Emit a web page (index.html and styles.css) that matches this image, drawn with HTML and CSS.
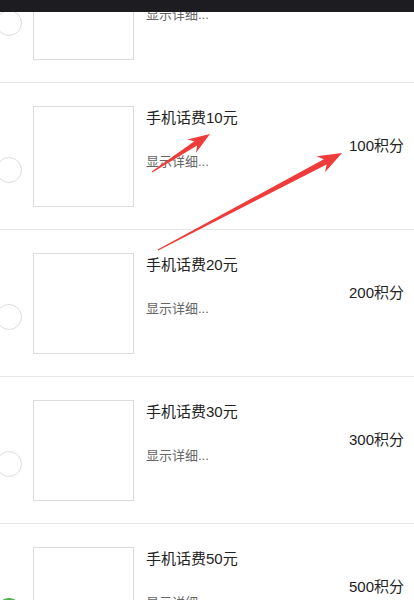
FILE: index.html
```html
<!DOCTYPE html>
<html lang="zh-CN">
<head>
  <meta charset="UTF-8" />
  <meta name="viewport" content="width=device-width, initial-scale=1.0"/>
  <title>积分兑换</title>
  <link rel="stylesheet" href="styles.css">
</head>
<body>
  <div class="statusbar"></div>

  <ul class="goods-list">
    <li class="goods-item">
      <span class="radio"></span>
      <div class="thumb"></div>
      <div class="info">
        <p class="title">手机话费5元</p>
        <p class="detail">显示详细...</p>
      </div>
      <span class="points">50积分</span>
    </li>
    <li class="goods-item">
      <span class="radio"></span>
      <div class="thumb"></div>
      <div class="info">
        <p class="title">手机话费10元</p>
        <p class="detail">显示详细...</p>
      </div>
      <span class="points">100积分</span>
    </li>
    <li class="goods-item">
      <span class="radio"></span>
      <div class="thumb"></div>
      <div class="info">
        <p class="title">手机话费20元</p>
        <p class="detail">显示详细...</p>
      </div>
      <span class="points">200积分</span>
    </li>
    <li class="goods-item">
      <span class="radio"></span>
      <div class="thumb"></div>
      <div class="info">
        <p class="title">手机话费30元</p>
        <p class="detail">显示详细...</p>
      </div>
      <span class="points">300积分</span>
    </li>
    <li class="goods-item">
      <span class="radio checked"></span>
      <div class="thumb"></div>
      <div class="info">
        <p class="title">手机话费50元</p>
        <p class="detail">显示详细...</p>
      </div>
      <span class="points">500积分</span>
    </li>
  </ul>

  <!-- annotation arrows drawn over the screenshot -->
  <svg class="marks" width="414" height="600" viewBox="0 0 414 600">
    <polygon points="152.3,172.5 197.1,145.4 196.0,152.8 210,134 187.2,139.4 194.4,141.2 151.7,171.5" />
    <polygon points="158.3,250.5 326.6,164.5 325.0,172.2 342,153 316.6,156.2 323.8,159.2 157.7,249.5" />
  </svg>
</body>
</html>
```

FILE: styles.css
```css
body {
  margin: 0;
  background: #fff;
  font-family: "Liberation Sans", "Noto Sans CJK SC", sans-serif;
  color: #222;
  overflow: hidden;
  height: 600px;
}

.statusbar {
  position: fixed;
  top: 0;
  left: 0;
  right: 0;
  height: 12px;
  background: #1c1c21;
  z-index: 2;
}

.goods-list {
  list-style: none;
  margin: -64px 0 0;
  padding: 0;
}

.goods-item {
  display: flex;
  align-items: flex-start;
  padding: 23px 10px 22px 0;
  border-bottom: 1px solid #e6e6e6;
}

.radio {
  flex: none;
  width: 26px;
  height: 26px;
  box-sizing: border-box;
  margin: 51px 0 0 -4px;
  border: 1px solid #dcdcdc;
  border-radius: 50%;
}

.radio.checked {
  background: #4caf50;
  border-color: #4caf50;
}

.thumb {
  flex: none;
  width: 101px;
  height: 101px;
  box-sizing: border-box;
  margin-left: 11px;
  border: 1px solid #dcdcdc;
}

.info {
  flex: 1;
  margin-left: 12px;
}

.title {
  margin: 2px 0 0;
  font-size: 15px;
  line-height: 20px;
  color: #222;
}

.detail {
  margin: 25px 0 0;
  font-size: 13px;
  line-height: 18px;
  color: #666;
}

.points {
  margin-top: 30px;
  font-size: 15px;
  line-height: 20px;
  color: #222;
}

.marks {
  position: absolute;
  top: 0;
  left: 0;
  z-index: 1;
}

.marks polygon {
  fill: #f03b3b;
}
```
